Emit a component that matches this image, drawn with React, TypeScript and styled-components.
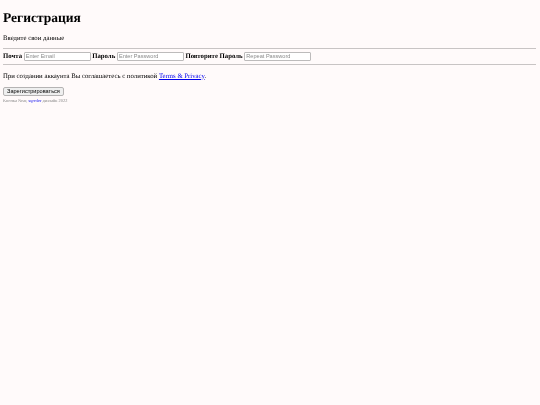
import React from "react";
import styled, { createGlobalStyle } from "styled-components";

const Global = createGlobalStyle`
  html, body { margin: 0; background: #fffafa; }
  body { font-family: "Liberation Serif", "Times New Roman", serif; font-size: 6.75px; color: #000; padding: 0 3.4px; text-rendering: geometricPrecision; }
`;
const Form = styled.form`
  display: flow-root;
  will-change: transform;
`;
const Title = styled.h1`
  font-size: 13.5px; font-weight: bold; margin: 10px 0 9px; line-height: 15.5px;
`;
const Text = styled.p`
  font-size: 6.75px; margin: 0; line-height: 8px;
`;
const Rule = styled.hr`
  margin: 5px 0 3px; border: 0; border-top: 1px solid #c8c4c4; height: 0;
`;
const Row = styled.div`
  display: flex; align-items: center; gap: 1.7px; height: 10px;
`;
const Label = styled.label`
  font-size: 6.75px; font-weight: bold;
`;
const Field = styled.input`
  width: 66.8px; height: 9.3px; box-sizing: border-box; padding: 0 1px; font-size: 5.6px;
  font-family: "Liberation Sans", Arial, sans-serif; border: 1px solid #bdbbbb; border-radius: 1px; background: #fff;
  &::placeholder { color: #8a8a8a; }
`;
const Submit = styled.button`
  display: block; font-family: "Liberation Sans", Arial, sans-serif; font-size: 5.6px; height: 9px; padding: 0 3px; border: 1px solid #b5b3b3; border-radius: 2px; background: #efefef; color: #000;
  margin-top: 6px;
`;
const Note = styled.div`
  font-size: 4.4px; color: #888; line-height: 5px; margin-top: 2px;
`;
const A = styled.a` color: #0000ee; text-decoration: underline; `;
const Terms = styled(Text)` margin-top: 8px; `;
const RuleBelow = styled(Rule)` margin: 2px 0 0; `;

export default function App() {
  return (
    <>
      <Global />
      <Form onSubmit={(e) => e.preventDefault()}>
        <Title>Регистрация</Title>
        <Text>Введите свои данные</Text>
        <Rule />
        <Row>
          <Label>Почта</Label><Field placeholder="Enter Email" />
          <Label>Пароль</Label><Field placeholder="Enter Password" />
          <Label>Повторите Пароль</Label><Field placeholder="Repeat Password" />
        </Row>
        <RuleBelow />
        <Terms>При создании аккаунта Вы соглашаетесь с политикой <A href="#">Terms &amp; Privacy</A>.</Terms>
        <Submit type="submit">Зарегистрироваться</Submit>
        <Note>Кнопка Near, <A href="#">sqooler</A> дизлайк 2022</Note>
      </Form>
    </>
  );
}
